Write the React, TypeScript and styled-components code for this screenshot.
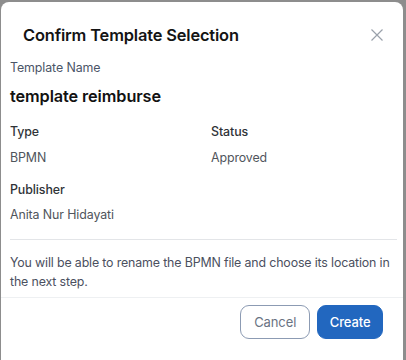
import React from "react";
import styled, { createGlobalStyle } from "styled-components";

const Global = createGlobalStyle`
  html, body { margin: 0; padding: 0; }
  body {
    background: #8d8d8d;
    font-family: Inter, "Noto Sans", sans-serif;
    overflow: hidden;
  }
`;

const Backdrop = styled.div`
  width: 406px;
  height: 360px;
  padding: 2px 0 0 1px;
  box-sizing: border-box;
  overflow: hidden;
`;

const Dialog = styled.div`
  width: 402px;
  height: 400px;
  background: #ffffff;
  border-radius: 8px 8px 0 0;
  display: flex;
  flex-direction: column;
`;

const Header = styled.div`
  display: flex;
  align-items: center;
  justify-content: space-between;
  padding: 21px 19px 12px 22px;
`;

const Title = styled.h2`
  margin: 0;
  font-size: 16.4px;
  line-height: 24px;
  font-weight: 600;
  color: #141414;
  letter-spacing: -0.15px;
`;

const CloseButton = styled.button`
  border: none;
  background: none;
  padding: 0;
  width: 14px;
  height: 14px;
  display: flex;
  align-items: center;
  justify-content: center;
  cursor: pointer;
`;

const Body = styled.div`
  padding: 0 6px 0 9px;
  display: flex;
  flex-direction: column;
`;

const Label = styled.div<{ $top?: number }>`
  font-size: 12.4px;
  line-height: 18px;
  font-weight: 500;
  color: #2f3337;
  letter-spacing: -0.1px;
  margin-top: ${(p) => p.$top ?? 0}px;
`;

const MutedLabel = styled(Label)`
  color: #4b5567;
  font-weight: 400;
`;

const Value = styled.div<{ $top?: number }>`
  font-size: 12.4px;
  line-height: 18px;
  color: #50555c;
  letter-spacing: -0.1px;
  margin-top: ${(p) => p.$top ?? 0}px;
`;

const NameValue = styled.div`
  font-size: 16.3px;
  line-height: 24px;
  font-weight: 600;
  color: #121212;
  letter-spacing: -0.1px;
  margin-top: 7px;
`;

const Grid = styled.div`
  display: grid;
  grid-template-columns: 201px 1fr;
  margin-top: 15px;
`;

const Field = styled.div`
  display: flex;
  flex-direction: column;
`;

const Divider = styled.hr`
  border: none;
  border-top: 1px solid #e3e5e8;
  margin: 15px 0 0 0;
`;

const Note = styled.p`
  margin: 13px 0 6px 0;
  font-size: 12.4px;
  line-height: 19px;
  color: #4b5060;
  letter-spacing: -0.15px;
`;

const Footer = styled.div`
  border-top: 1px solid #eef0f2;
  display: flex;
  justify-content: flex-end;
  gap: 7px;
  padding: 7px 20px 0 0;
`;

const Button = styled.button<{ $primary?: boolean }>`
  height: 34px;
  padding: 0 ${(p) => (p.$primary ? 11.5 : 13)}px;
  border-radius: 9px;
  font-family: Inter, "Noto Sans", sans-serif;
  font-size: 13px;
  letter-spacing: -0.1px;
  font-weight: ${(p) => (p.$primary ? 500 : 400)};
  border: 1px solid ${(p) => (p.$primary ? "#2267bf" : "#8c9bb3")};
  background: ${(p) => (p.$primary ? "#2267bf" : "#ffffff")};
  color: ${(p) => (p.$primary ? "#ffffff" : "#6a7383")};
  cursor: pointer;
`;

export default function App() {
  return (
    <>
      <Global />
      <Backdrop>
        <Dialog>
          <Header>
            <Title>Confirm Template Selection</Title>
            <CloseButton aria-label="Close">
              <svg width="12" height="12" viewBox="0 0 12 12">
                <path d="M0.5 0.5 L11.5 11.5 M11.5 0.5 L0.5 11.5" stroke="#9aa1ab" strokeWidth="1.2" />
              </svg>
            </CloseButton>
          </Header>
          <Body>
            <MutedLabel>Template Name</MutedLabel>
            <NameValue>template reimburse</NameValue>
            <Grid>
              <Field>
                <Label>Type</Label>
                <Value $top={8}>BPMN</Value>
              </Field>
              <Field>
                <Label>Status</Label>
                <Value $top={8}>Approved</Value>
              </Field>
            </Grid>
            <Label $top={14}>Publisher</Label>
            <Value $top={7}>Anita Nur Hidayati</Value>
            <Divider />
            <Note>
              You will be able to rename the BPMN file and choose its location in the next step.
            </Note>
          </Body>
          <Footer>
            <Button>Cancel</Button>
            <Button $primary>Create</Button>
          </Footer>
        </Dialog>
      </Backdrop>
    </>
  );
}
